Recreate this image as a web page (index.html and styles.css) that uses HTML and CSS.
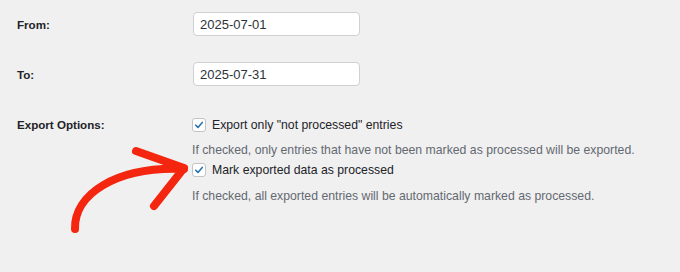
FILE: index.html
```html
<!DOCTYPE html>
<html lang="en">
<head>
<meta charset="utf-8">
<title>Export Options</title>
<link rel="stylesheet" href="styles.css">
</head>
<body>
<main class="form">
  <div class="row row-from">
    <label class="label" for="from">From:</label>
    <input class="date" id="from" type="text" value="2025-07-01">
  </div>
  <div class="row row-to">
    <label class="label" for="to">To:</label>
    <input class="date" id="to" type="text" value="2025-07-31">
  </div>
  <div class="row row-options">
    <div class="label label-top">Export Options:</div>
    <div class="options">
      <label class="check"><span class="box"><svg viewBox="0 0 14 14" width="14" height="14"><path d="M3.2 7.2 L5.8 9.8 L10.8 4" fill="none" stroke="#2271b1" stroke-width="1.8" stroke-linecap="round" stroke-linejoin="round"/></svg></span>Export only "not processed" entries</label>
      <p class="desc desc-first">If checked, only entries that have not been marked as processed will be exported.</p>
      <label class="check"><span class="box"><svg viewBox="0 0 14 14" width="14" height="14"><path d="M3.2 7.2 L5.8 9.8 L10.8 4" fill="none" stroke="#2271b1" stroke-width="1.8" stroke-linecap="round" stroke-linejoin="round"/></svg></span>Mark exported data as processed</label>
      <p class="desc desc-second">If checked, all exported entries will be automatically marked as processed.</p>
    </div>
  </div>
</main>
<svg class="arrow" width="680" height="272" viewBox="0 0 680 272" aria-hidden="true">
  <path d="M75 229 C 74 195, 115 166, 184 169" fill="none" stroke="#f4260f" stroke-width="8" stroke-linecap="round"/>
  <path d="M136 151 L184 168 L154 206" fill="none" stroke="#f4260f" stroke-width="8" stroke-linecap="round" stroke-linejoin="round"/>
</svg>
</body>
</html>
```
FILE: styles.css
```css
html, body {
  margin: 0;
  padding: 0;
}
body {
  background: #f0f0f1;
  font-family: "Liberation Sans", Arial, sans-serif;
  font-size: 12.25px;
  color: #1d2327;
  width: 680px;
  height: 272px;
  overflow: hidden;
  position: relative;
}
.form {
  padding: 12px 0 0 17px;
}
.row {
  display: flex;
  align-items: center;
}
.row-to {
  margin-top: 26px;
}
.row-options {
  margin-top: 29px;
  align-items: flex-start;
}
.label {
  width: 176px;
  font-weight: bold;
  font-size: 11.6px;
  color: #1d2327;
}
.label-top {
  line-height: 20px;
}
.date {
  box-sizing: border-box;
  width: 167px;
  height: 24px;
  margin: 0;
  padding: 0 6px;
  border: 1px solid #cfd0d3;
  border-radius: 4px;
  background: #fff;
  font-family: "Liberation Sans", Arial, sans-serif;
  font-size: 13px;
  color: #2c3338;
  outline: none;
}
.options {
  display: flex;
  flex-direction: column;
  margin-left: -1px;
}
.check {
  display: flex;
  align-items: center;
  line-height: 20px;
  height: 20px;
  color: #1d2327;
}
.box {
  box-sizing: border-box;
  width: 14px;
  height: 14px;
  border: 1px solid #c3c4c7;
  border-radius: 3px;
  background: #fff;
  margin-right: 6px;
  display: flex;
  align-items: center;
  justify-content: center;
}
.box svg {
  display: block;
  width: 12px;
  height: 12px;
}
.desc {
  margin: 0;
  line-height: 20px;
  color: #646970;
}
.desc-first {
  margin-top: 5px;
}
.desc-second {
  margin-top: 6px;
}
.arrow {
  position: absolute;
  left: 0;
  top: 0;
  pointer-events: none;
}
```
